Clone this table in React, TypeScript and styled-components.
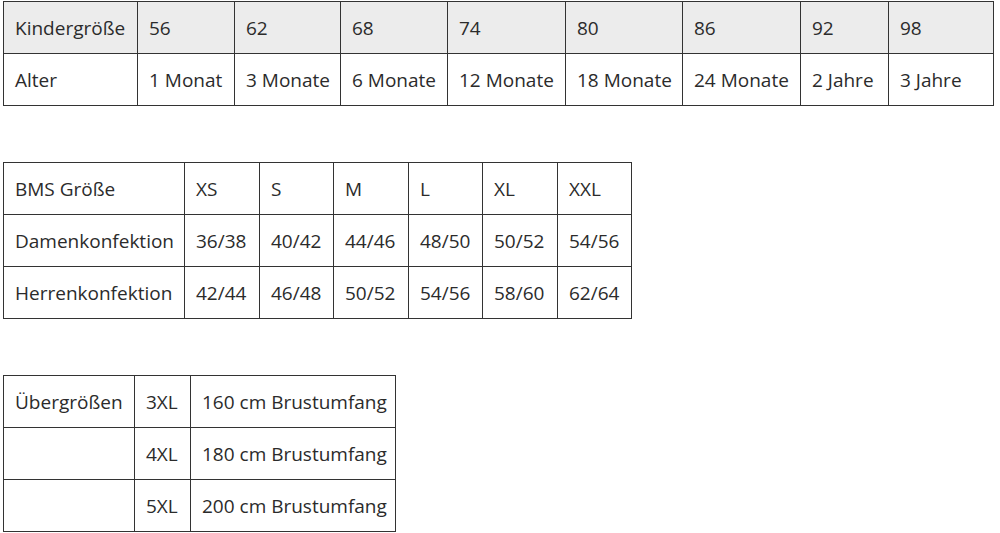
import React from "react";
import styled, { createGlobalStyle } from "styled-components";

const GlobalStyle = createGlobalStyle`
  html, body {
    margin: 0;
    padding: 0;
    background: #ffffff;
  }
  body {
    font-family: "Open Sans", "Noto Sans", sans-serif;
    color: #2b2b2b;
  }
`;

const Page = styled.div`
  display: flex;
  flex-direction: column;
  align-items: flex-start;
  gap: 56px;
  padding: 1px 0 0 3px;
`;

const SizeTable = styled.table`
  border-collapse: collapse;
  table-layout: fixed;
  font-size: 19px;
  line-height: 1;
`;

const Col = styled.col<{ $w: number }>`
  width: ${(p) => p.$w}px;
`;

const Row = styled.tr<{ $head?: boolean }>`
  height: 52px;
  background: ${(p) => (p.$head ? "#ececec" : "#ffffff")};
`;

const Cell = styled.td`
  border: 1px solid #333333;
  padding: 2px 0 0 11px;
  vertical-align: middle;
  white-space: nowrap;
  color: #2b2b2b;
`;

type TableProps = {
  widths: number[];
  rows: string[][];
  headFirst?: boolean;
};

function Table({ widths, rows, headFirst }: TableProps) {
  return (
    <SizeTable>
      <colgroup>
        {widths.map((w, i) => (
          <Col key={i} $w={w} />
        ))}
      </colgroup>
      <tbody>
        {rows.map((r, i) => (
          <Row key={i} $head={headFirst && i === 0}>
            {r.map((c, j) => (
              <Cell key={j}>{c}</Cell>
            ))}
          </Row>
        ))}
      </tbody>
    </SizeTable>
  );
}

const kids = [
  ["Kindergröße", "56", "62", "68", "74", "80", "86", "92", "98"],
  ["Alter", "1 Monat", "3 Monate", "6 Monate", "12 Monate", "18 Monate", "24 Monate", "2 Jahre", "3 Jahre"],
];

const adults = [
  ["BMS Größe", "XS", "S", "M", "L", "XL", "XXL"],
  ["Damenkonfektion", "36/38", "40/42", "44/46", "48/50", "50/52", "54/56"],
  ["Herrenkonfektion", "42/44", "46/48", "50/52", "54/56", "58/60", "62/64"],
];

const plus = [
  ["Übergrößen", "3XL", "160 cm Brustumfang"],
  ["", "4XL", "180 cm Brustumfang"],
  ["", "5XL", "200 cm Brustumfang"],
];

export default function App() {
  return (
    <>
      <GlobalStyle />
      <Page>
        <Table headFirst widths={[134, 97, 106, 107, 118, 117, 118, 88, 105]} rows={kids} />
        <Table widths={[181, 75, 74, 75, 74, 75, 74]} rows={adults} />
        <Table widths={[131, 56, 205]} rows={plus} />
      </Page>
    </>
  );
}
